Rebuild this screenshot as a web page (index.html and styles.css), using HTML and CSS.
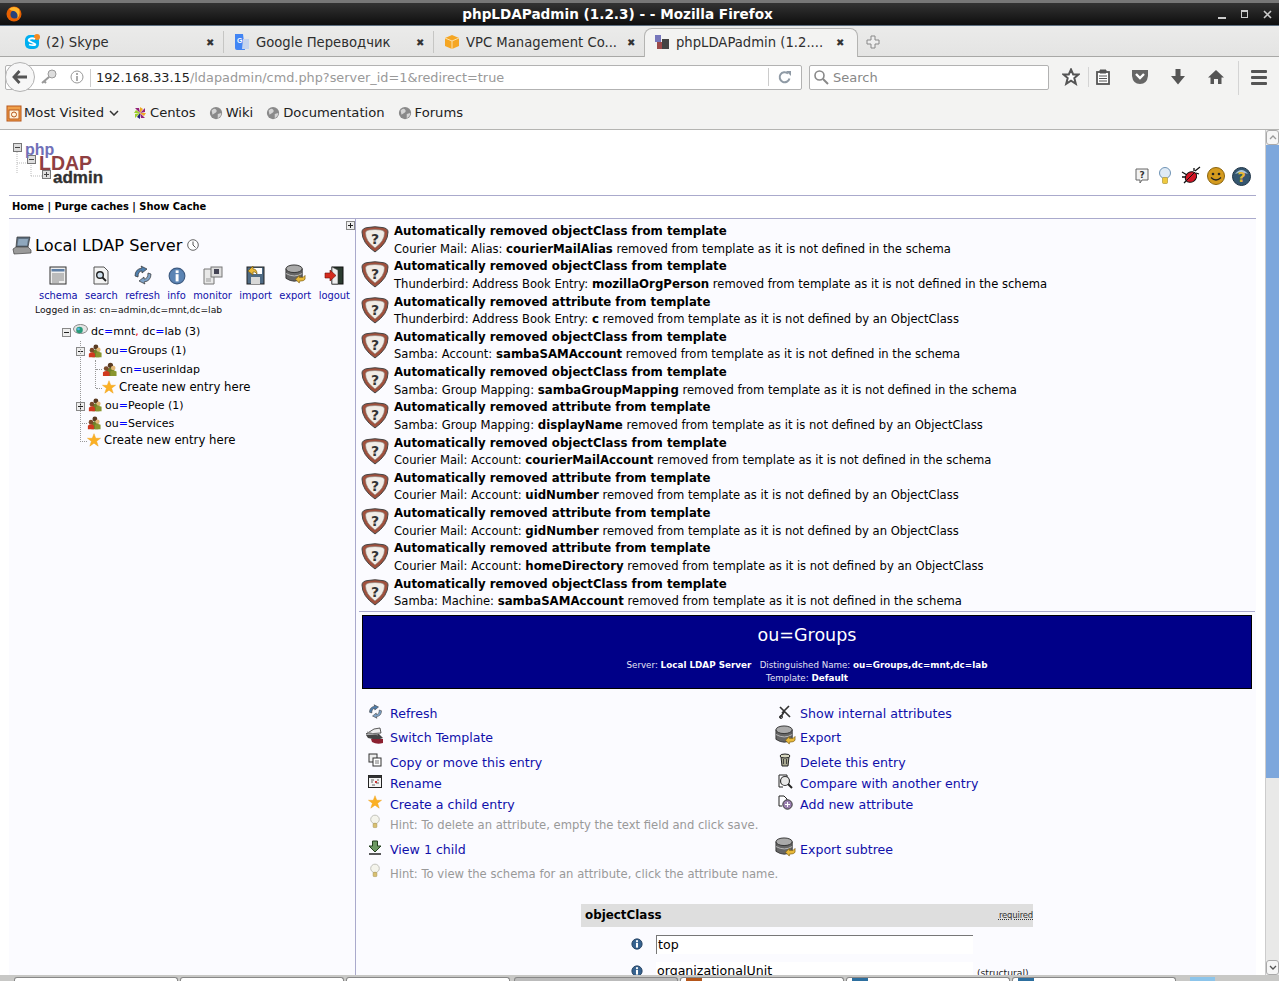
FILE: index.html
```html
<!DOCTYPE html>
<html lang="en">
<head>
    <meta charset="UTF-8">
    <meta name="viewport" content="width=device-width, initial-scale=1.0">
    <title>phpLDAPadmin (1.2.3) - - Mozilla Firefox</title>
    <link rel="stylesheet" href="styles.css">
</head>
<body>

<svg class="defs" width="0" height="0">
    <symbol id="i-warn" viewBox="0 0 28 28">
        <path d="M1 7Q1 3 7 2.500Q14 1 21 2.500Q27 3 27 7Q27 18 14 27Q1 18 1 7Z" fill="#a0503c" stroke="#444"/>
        <path d="M4.500 8Q4.500 5.500 8 5Q14 4 20 5Q23.500 5.500 23.500 8Q23.500 16 14 23Q4.500 16 4.500 8Z" fill="#f1ece6" stroke="#8a8078" stroke-width=".6"/>
        <text x="14" y="18.500" text-anchor="middle" font-family="DejaVu Sans" font-weight="700" font-size="14" fill="#333">?</text>
    </symbol>
    <symbol id="i-folks" viewBox="0 0 16 16">
        <circle cx="9" cy="3.500" r="2.800" fill="#5a3b22"/>
        <path d="M5 15V8Q9 4 13 8V15Z" fill="#6f7f2a"/>
        <circle cx="4.500" cy="7" r="2.600" fill="#7a4a2a"/>
        <path d="M1 15V11Q4.500 8 8 11V15Z" fill="#d0391f"/>
        <circle cx="12" cy="6.500" r="2.400" fill="#e3b878"/>
        <path d="M9 15V10Q12 8 15.500 10V15Z" fill="#8a962f"/>
    </symbol>
    <symbol id="i-star" viewBox="0 0 16 16">
        <path d="M8 .8L10 6H15.500L11 9.300L12.800 15L8 11.600L3.200 15L5 9.300L.5 6H6Z" fill="#fbb024" stroke="#eea01a" stroke-width=".5"/>
    </symbol>
    <symbol id="i-info" viewBox="0 0 16 16">
        <circle cx="8" cy="8" r="7" fill="#5b84b4" stroke="#3d5a80"/>
        <rect x="6.800" y="3" width="2.600" height="2.400" fill="#fff"/>
        <rect x="6.800" y="6.400" width="2.600" height="6.400" fill="#fff"/>
    </symbol>
    <symbol id="i-dark-info" viewBox="0 0 14 14">
        <circle cx="7" cy="7" r="6" fill="#36628f" stroke="#1e3a5a"/>
        <rect x="5.800" y="2.600" width="2.400" height="2" fill="#fff"/>
        <rect x="5.800" y="5.600" width="2.400" height="5.600" fill="#fff"/>
    </symbol>
    <symbol id="i-refresh" viewBox="0 0 20 20">
        <path d="M2 11Q2 4 9 3L8 1L14 4L9 8L9 6Q5 6 5 12Z" fill="#4f7fae" stroke="#333" stroke-width=".7"/>
        <path d="M18 9Q18 16 11 17L12 19L6 16L11 12L11 14Q15 14 15 8Z" fill="#7fa3c8" stroke="#333" stroke-width=".7"/>
    </symbol>
    <symbol id="i-db" viewBox="0 0 22 22">
        <path d="M1 5V15Q10 21 18 15V5Z" fill="#666" stroke="#333"/>
        <ellipse cx="9.500" cy="5" rx="8.500" ry="4" fill="#aaa" stroke="#333"/>
        <path d="M1 10Q10 15 18 10" fill="none" stroke="#bbb"/>
        <path d="M11 16L15 12V14H19L21 12V16Q20 18 15 18V20Z" fill="#e9b93a" stroke="#7a5c10" stroke-width=".7"/>
    </symbol>
    <symbol id="i-bulb" viewBox="0 0 14 18">
        <circle cx="7" cy="6" r="5" fill="#f4f4ec" stroke="#b9b9b0"/>
        <rect x="4.800" y="10.500" width="4.400" height="5" rx="1" fill="#d9c070" stroke="#a29050" stroke-width=".6"/>
    </symbol>
    <symbol id="i-minus" viewBox="0 0 9 9">
        <rect x=".5" y=".5" width="8" height="8" fill="#eee" stroke="#888"/>
        <path d="M2 4.500H7" stroke="#222"/>
    </symbol>
    <symbol id="i-plus" viewBox="0 0 9 9">
        <rect x=".5" y=".5" width="8" height="8" fill="#eee" stroke="#888"/>
        <path d="M2 4.500H7M4.500 2V7" stroke="#222"/>
    </symbol>
    <symbol id="i-globe" viewBox="0 0 16 16">
        <circle cx="8" cy="8" r="7" fill="#8a8a8a"/>
        <path d="M3 5Q6 2 8 4T7 8T4 10ZM10 9L14 8Q14 12 10 14Z" fill="#d5d5d5"/>
    </symbol>
</svg>

<div class="window">

    <!-- window title -->
    <div class="titlebar">
        <svg class="ff-logo" width="16" height="16" viewBox="0 0 16 16">
            <circle cx="8" cy="8" r="7.500" fill="#e66000"/>
            <circle cx="8.500" cy="8.500" r="4" fill="#24407c"/>
            <path d="M3 3Q8 -1 13 3Q15 9 11 13Q13 7 8 5Q5 5 3 3Z" fill="#ffb52c"/>
        </svg>
        <span class="title-text">phpLDAPadmin (1.2.3) - - Mozilla Firefox</span>
        <div class="win-btns">
            <span class="win-min"></span>
            <span class="win-max"></span>
            <svg width="9" height="9" viewBox="0 0 9 9"><path d="M1 1L8 8M8 1L1 8" stroke="#ccc" stroke-width="1.600"/></svg>
        </div>
    </div>

    <!-- tabs -->
    <div class="tabbar">
        <div class="tab">
            <svg width="16" height="16" viewBox="0 0 16 16">
                <rect x="1" y="1" width="14" height="14" rx="5" fill="#00aff0"/>
                <circle cx="13" cy="3" r="3" fill="#f58a1f"/>
                <path d="M11 5Q8 3.500 5.500 5T8 8.500T10.500 11T5 10.500" fill="none" stroke="#fff" stroke-width="1.800"/>
            </svg>
            <span class="tab-name">(2) Skype</span>
            <span class="tab-x">✖</span>
        </div>
        <div class="tab">
            <svg width="16" height="16" viewBox="0 0 16 16">
                <path d="M1 0H9L11 16H3Q1 16 1 14Z" fill="#4285f4"/>
                <path d="M9 5H15V15H8Z" fill="#c5d4ee"/>
                <text x="3" y="9" font-family="Liberation Sans" font-weight="700" font-size="7" fill="#fff">G</text>
            </svg>
            <span class="tab-name">Google Переводчик</span>
            <span class="tab-x">✖</span>
        </div>
        <div class="tab tab-last">
            <svg width="16" height="16" viewBox="0 0 16 16">
                <path d="M1 4L8 1L15 4V12L8 15L1 12Z" fill="#f5a623"/>
                <path d="M1 4L8 7L15 4M8 7V15" fill="none" stroke="#fce0a8"/>
            </svg>
            <span class="tab-name">VPC Management Co...</span>
            <span class="tab-x">✖</span>
        </div>
        <div class="tab tab-active">
            <svg width="16" height="16" viewBox="0 0 16 16">
                <rect x="1" y="1" width="6" height="7" fill="#7777bb"/>
                <rect x="3" y="8" width="5" height="7" fill="#9c4a4a"/>
                <rect x="8" y="5" width="7" height="10" fill="#444"/>
            </svg>
            <span class="tab-name">phpLDAPadmin (1.2....</span>
            <span class="tab-x">✖</span>
        </div>
        <svg class="tab-new" width="14" height="14" viewBox="0 0 14 14">
            <path d="M5 1H9V5H13V9H9V13H5V9H1V5H5Z" fill="#eee" stroke="#888"/>
        </svg>
    </div>

    <!-- url bar -->
    <div class="navbar">
        <div class="urlbox">
            <div class="backbtn">
                <svg width="16" height="14" viewBox="0 0 16 14"><path d="M7.500 1L2 7L7.500 13M2.500 7H15" fill="none" stroke="#555" stroke-width="2.800"/></svg>
            </div>
            <svg class="key-ico" width="18" height="16" viewBox="0 0 18 16">
                <circle cx="12" cy="5" r="4" fill="#ddd" stroke="#999"/>
                <path d="M9 8L2 14M4 12L6 14" fill="none" stroke="#999" stroke-width="2"/>
            </svg>
            <svg class="url-info" width="14" height="14" viewBox="0 0 14 14">
                <circle cx="7" cy="7" r="6" fill="none" stroke="#999"/>
                <path d="M7 6V11M7 3V5" stroke="#888" stroke-width="1.400"/>
            </svg>
            <span class="url-text"><b>192.168.33.15</b>/ldapadmin/cmd.php?server_id=1&amp;redirect=true</span>
            <span class="url-reload">
                <svg width="14" height="14" viewBox="0 0 14 14"><path d="M11.500 8.500A5 5 0 1 1 10 3.500" fill="none" stroke="#8f9aa5" stroke-width="2"/><path d="M8 1H13V6Z" fill="#8f9aa5"/></svg>
            </span>
        </div>
        <div class="searchbox">
            <svg width="16" height="16" viewBox="0 0 16 16"><circle cx="6.500" cy="6.500" r="4.500" fill="none" stroke="#888" stroke-width="1.600"/><path d="M10 10L15 15" stroke="#888" stroke-width="2"/></svg>
            <span>Search</span>
        </div>
        <div class="tools">
            <span class="slot slot-star"><svg width="18" height="18" viewBox="0 0 18 18"><path d="M9 1.500L11.200 6.500H16.500L12.300 10L13.800 15.800L9 12.700L4.200 15.800L5.700 10L1.500 6.500H6.800Z" fill="#fff" stroke="#555" stroke-width="2"/></svg></span>
            <span class="tool-sep"></span>
            <span class="slot slot-clip"><svg width="16" height="16" viewBox="0 0 16 16"><rect x="2" y="3" width="12" height="12" fill="#fff" stroke="#555" stroke-width="1.800"/><path d="M5 1H11V4H5ZM4 7H12M4 9.500H12M4 12H12" fill="#555" stroke="#555"/></svg></span>
            <span class="slot"><svg width="18" height="16" viewBox="0 0 18 16"><path d="M1 1H17V7Q16 15 9 15Q2 15 1 7Z" fill="#666"/><path d="M5 5L9 9L13 5" fill="none" stroke="#fff" stroke-width="2.400"/></svg></span>
            <span class="slot"><svg width="16" height="16" viewBox="0 0 16 16"><path d="M5.500 0H10.500V7H15L8 15.500L1 7H5.500Z" fill="#555"/></svg></span>
            <span class="slot"><svg width="18" height="16" viewBox="0 0 18 16"><path d="M9 1L17 8.500H14.500V15H11V10H7V15H3.500V8.500H1Z" fill="#555"/></svg></span>
            <span class="tool-sep tool-sep-tall"></span>
            <span class="burger"><i></i><i></i><i></i></span>
        </div>
    </div>

    <!-- bookmarks -->
    <div class="bookmarks">
        <span class="bm">
            <svg width="16" height="18" viewBox="0 0 16 18"><rect x="1" y="2" width="14" height="15" fill="#f0a04a" stroke="#b8561a"/><rect x="3" y="6" width="10" height="9" fill="#fff3dc" stroke="#b8561a"/><circle cx="8" cy="10.500" r="2.500" fill="none" stroke="#b8561a"/></svg>
            Most Visited<svg class="chev" width="10" height="6" viewBox="0 0 10 6"><path d="M1 1L5 5L9 1" fill="none" stroke="#333" stroke-width="1.500"/></svg>
        </span>
        <span class="bm">
            <svg width="14" height="14" viewBox="0 0 14 14"><path d="M7 7L2 2H6ZM7 7L12 2V6ZM7 7L12 12H8Z" fill="#932279"/><path d="M7 7L7 1L10 3ZM7 7L13 7L11 10Z" fill="#efa724"/><path d="M7 7L1 7L3 4ZM7 7L2 12L2 8Z" fill="#9ccd2a"/><path d="M7 7L7 13L4 11Z" fill="#262577"/></svg>
            Centos
        </span>
        <span class="bm"><svg width="14" height="14"><use href="#i-globe"/></svg>Wiki</span>
        <span class="bm"><svg width="14" height="14"><use href="#i-globe"/></svg>Documentation</span>
        <span class="bm"><svg width="14" height="14"><use href="#i-globe"/></svg>Forums</span>
    </div>

    <!-- page -->
    <div class="page">
        <div class="page-inner">
            <header class="head">
                <div class="logo">
                    <svg class="logo-tree" width="42" height="44" viewBox="0 0 42 44">
                        <path d="M5 14V36M5 25H19M19 25V38M19 38H34" fill="none" stroke="#bbb" stroke-dasharray="1 1"/>
                        <g fill="#ddd" stroke="#777"><rect x="1.500" y="5.500" width="8" height="8"/><rect x="15.500" y="17.500" width="8" height="8"/><rect x="30.500" y="32.500" width="8" height="8"/></g>
                        <path d="M3 9.500H8M17 21.500H22M32 36.500H37M34.500 34V39" stroke="#444"/>
                    </svg>
                    <span class="logo-php">php</span>
                    <span class="logo-ldap">LDAP</span>
                    <span class="logo-admin">admin</span>
                </div>
                <div class="head-icons">
                    <svg width="14" height="16" viewBox="0 0 14 16"><path d="M1 1H13V12H7L5 15V12H1Z" fill="#f2f2f2" stroke="#666"/><text x="7" y="10" text-anchor="middle" font-family="DejaVu Sans" font-weight="700" font-size="9" fill="#333">?</text></svg>
                    <svg width="14" height="20" viewBox="0 0 14 18"><circle cx="7" cy="6" r="5.500" fill="#dfeaf5" stroke="#6f93b5"/><rect x="4.500" y="10.500" width="5" height="6" rx="1" fill="#efc93e" stroke="#a28a2a" stroke-width=".6"/></svg>
                    <svg width="20" height="20" viewBox="0 0 20 20"><path d="M1 6L6 9M1 11H5M3 17L7 13M19 1L14 5M13 2L13 5M18 8L15 7" stroke="#111" stroke-width="1.300"/><ellipse cx="10" cy="11" rx="6" ry="5" fill="#d31525" stroke="#111" transform="rotate(-35 10 11)"/><path d="M5 15L14 6" stroke="#111"/></svg>
                    <svg width="18" height="18" viewBox="0 0 18 18"><circle cx="9" cy="9" r="8.500" fill="#d59b1e" stroke="#8a6510"/><circle cx="6" cy="7" r="1.300" fill="#222"/><circle cx="12" cy="7" r="1.300" fill="#222"/><path d="M4 10.500Q9 15.500 14 10.500" fill="none" stroke="#222" stroke-width="1.300"/></svg>
                    <svg width="19" height="19" viewBox="0 0 19 19"><circle cx="9.500" cy="9.500" r="9" fill="#35566f" stroke="#1f3446"/><path d="M3 7Q9.500 -1 16 7Q9.500 4 3 7Z" fill="#a9c4d8"/><text x="9.500" y="15" text-anchor="middle" font-family="DejaVu Sans" font-weight="700" font-size="14" fill="#e6b833">?</text></svg>
                </div>
            </header>
            <nav class="topmenu">Home | Purge caches | Show Cache</nav>

            <div class="columns">
                <!-- left tree -->
                <aside class="tree-panel">
                    <svg class="collapse" width="9" height="9"><use href="#i-plus"/></svg>
                    <div class="server-title">
                        <svg width="20" height="20" viewBox="0 0 20 20">
                            <path d="M5 2H18L16 12H4Z" fill="#5e6f80" stroke="#333" stroke-width=".7"/>
                            <path d="M6.500 4H16L15 10.500H5.500Z" fill="#8fa7bd"/>
                            <path d="M1 14L4 12H16L19 15V18L2 19Z" fill="#9a9a9a" stroke="#444" stroke-width=".7"/>
                        </svg>
                        <span>Local LDAP Server</span>
                        <svg width="12" height="12" viewBox="0 0 12 12"><circle cx="6" cy="6" r="5.300" fill="#fff" stroke="#666"/><path d="M6 2.500V6L8.500 8.500" fill="none" stroke="#555"/></svg>
                    </div>
                    <div class="server-links">
                        <a class="slink">
                            <svg width="18" height="19" viewBox="0 0 18 19"><rect x="1" y="1" width="16" height="17" fill="#eee" stroke="#333"/><rect x="2.500" y="3" width="13" height="2.500" fill="#5f7fa5"/><path d="M3 8H15M3 10H15M3 12H15M3 14H15M3 16H10" stroke="#888"/></svg>
                            schema
                        </a>
                        <a class="slink">
                            <svg width="16" height="19" viewBox="0 0 16 19"><path d="M1 1H11L15 5V18H1Z" fill="#f4f4f4" stroke="#555"/><circle cx="7" cy="9" r="3.300" fill="#cfe0ee" stroke="#222" stroke-width="1.400"/><path d="M9.500 11.500L13 15" stroke="#222" stroke-width="1.800"/></svg>
                            search
                        </a>
                        <a class="slink"><svg width="20" height="20"><use href="#i-refresh"/></svg>refresh</a>
                        <a class="slink"><svg width="18" height="18"><use href="#i-info"/></svg>info</a>
                        <a class="slink">
                            <svg width="20" height="19" viewBox="0 0 20 19"><path d="M1 3H11V18H1Z" fill="#e8e8e8" stroke="#777"/><rect x="8" y="1" width="11" height="10" fill="#ddd" stroke="#777"/><rect x="11" y="3" width="5" height="5" fill="#445"/><path d="M3 13H8M3 15H8" stroke="#999"/></svg>
                            monitor
                        </a>
                        <a class="slink">
                            <svg width="19" height="20" viewBox="0 0 19 20"><rect x="1" y="2" width="17" height="17" fill="#4f6b85" stroke="#222"/><rect x="6" y="3" width="10" height="6" fill="#fff"/><rect x="5" y="12" width="9" height="7" fill="#d8d8d8"/><path d="M2 6L7 1V4Q11 4 11 9Q9 6 7 7V10Z" fill="#eab839" stroke="#7a5c10" stroke-width=".7"/></svg>
                            import
                        </a>
                        <a class="slink"><svg width="21" height="21"><use href="#i-db"/></svg>export</a>
                        <a class="slink">
                            <svg width="20" height="19" viewBox="0 0 20 19"><rect x="8" y="1" width="11" height="17" fill="#2c3c30" stroke="#111"/><path d="M8 1L14 4V18H8Z" fill="#eee" stroke="#333" stroke-width=".6"/><path d="M1 7H6V4L12 9.500L6 15V12H1Z" fill="#d52b1e" stroke="#6a1008" stroke-width=".6"/></svg>
                            logout
                        </a>
                    </div>
                    <div class="logged">Logged in as: cn=admin,dc=mnt,dc=lab</div>

                    <ul class="tree">
                        <li class="node r19 root">
                            <svg class="toggle" width="9" height="9"><use href="#i-minus"/></svg>
                            <svg width="15" height="12" viewBox="0 0 15 12"><ellipse cx="7.500" cy="5" rx="7" ry="4.500" fill="#e4e4e4" stroke="#888"/><circle cx="6.500" cy="6" r="3.300" fill="#2a9a7a"/><circle cx="5.500" cy="5" r="1.300" fill="#58b8e8"/></svg>
                            <span class="dn">dc<em>=</em>mnt<u>,</u> dc<em>=</em>lab (3)</span>
                        </li>
                        <li>
                            <ul class="branch">
                                <li class="node r19 ou">
                                    <svg class="toggle" width="9" height="9"><use href="#i-minus"/></svg>
                                    <svg width="14" height="14"><use href="#i-folks"/></svg>
                                    <span class="dn">ou<em>=</em>Groups (1)</span>
                                </li>
                                <li>
                                    <ul class="branch branch-in">
                                        <li class="node leaf r19"><svg width="15" height="15"><use href="#i-folks"/></svg><span class="dn">cn<em>=</em>userinldap</span></li>
                                        <li class="node leaf r15"><svg width="14" height="14"><use href="#i-star"/></svg><span>Create new entry here</span></li>
                                    </ul>
                                </li>
                                <li class="node ou">
                                    <svg class="toggle" width="9" height="9"><use href="#i-plus"/></svg>
                                    <svg width="14" height="14"><use href="#i-folks"/></svg>
                                    <span class="dn">ou<em>=</em>People (1)</span>
                                </li>
                                <li class="node ou stub"><svg width="14" height="14"><use href="#i-folks"/></svg><span class="dn">ou<em>=</em>Services</span></li>
                                <li class="node ou stub r16"><svg width="14" height="14"><use href="#i-star"/></svg><span>Create new entry here</span></li>
                            </ul>
                        </li>
                    </ul>
                </aside>

                <!-- right content -->
                <main class="content">
                    <div class="msg"><svg width="28" height="28"><use href="#i-warn"/></svg><p><b>Automatically removed objectClass from template</b><br>Courier Mail: Alias: <b>courierMailAlias</b> removed from template as it is not defined in the schema</p></div>
                    <div class="msg"><svg width="28" height="28"><use href="#i-warn"/></svg><p><b>Automatically removed objectClass from template</b><br>Thunderbird: Address Book Entry: <b>mozillaOrgPerson</b> removed from template as it is not defined in the schema</p></div>
                    <div class="msg"><svg width="28" height="28"><use href="#i-warn"/></svg><p><b>Automatically removed attribute from template</b><br>Thunderbird: Address Book Entry: <b>c</b> removed from template as it is not defined by an ObjectClass</p></div>
                    <div class="msg"><svg width="28" height="28"><use href="#i-warn"/></svg><p><b>Automatically removed objectClass from template</b><br>Samba: Account: <b>sambaSAMAccount</b> removed from template as it is not defined in the schema</p></div>
                    <div class="msg"><svg width="28" height="28"><use href="#i-warn"/></svg><p><b>Automatically removed objectClass from template</b><br>Samba: Group Mapping: <b>sambaGroupMapping</b> removed from template as it is not defined in the schema</p></div>
                    <div class="msg"><svg width="28" height="28"><use href="#i-warn"/></svg><p><b>Automatically removed attribute from template</b><br>Samba: Group Mapping: <b>displayName</b> removed from template as it is not defined by an ObjectClass</p></div>
                    <div class="msg"><svg width="28" height="28"><use href="#i-warn"/></svg><p><b>Automatically removed objectClass from template</b><br>Courier Mail: Account: <b>courierMailAccount</b> removed from template as it is not defined in the schema</p></div>
                    <div class="msg"><svg width="28" height="28"><use href="#i-warn"/></svg><p><b>Automatically removed attribute from template</b><br>Courier Mail: Account: <b>uidNumber</b> removed from template as it is not defined by an ObjectClass</p></div>
                    <div class="msg"><svg width="28" height="28"><use href="#i-warn"/></svg><p><b>Automatically removed attribute from template</b><br>Courier Mail: Account: <b>gidNumber</b> removed from template as it is not defined by an ObjectClass</p></div>
                    <div class="msg"><svg width="28" height="28"><use href="#i-warn"/></svg><p><b>Automatically removed attribute from template</b><br>Courier Mail: Account: <b>homeDirectory</b> removed from template as it is not defined by an ObjectClass</p></div>
                    <div class="msg"><svg width="28" height="28"><use href="#i-warn"/></svg><p><b>Automatically removed objectClass from template</b><br>Samba: Machine: <b>sambaSAMAccount</b> removed from template as it is not defined in the schema</p></div>

                    <hr class="rule">

                    <div class="entry-head">
                        <h3>ou=Groups</h3>
                        <div class="entry-sub">Server: <b>Local LDAP Server</b> &nbsp; Distinguished Name: <b>ou=Groups,dc=mnt,dc=lab</b><br>Template: <b>Default</b></div>
                    </div>

                    <div class="actions">
                        <a class="act h24"><span class="ico"><svg width="15" height="15"><use href="#i-refresh"/></svg></span>Refresh</a>
                        <a class="act h24">
                            <span class="ico"><svg width="14" height="14" viewBox="0 0 14 14"><path d="M2 13L6 7M2 2L5 5L12 12M11 1L8 4L4 8" fill="none" stroke="#333" stroke-width="1.700"/><circle cx="3" cy="12" r="1.500" fill="none" stroke="#333"/></svg></span>
                            Show internal attributes
                        </a>
                        <a class="act h24">
                            <span class="ico"><svg width="21" height="18" viewBox="0 0 21 18"><path d="M1 7L9 2L15 1L16 6Z" fill="#eee" stroke="#333" stroke-width=".8"/><path d="M1 8L14 7L18 11L12 13L3 11Z" fill="#444"/><path d="M6 12H18V16Q12 18 7 15Z" fill="#8b2030"/><path d="M2 5L13 8" stroke="#888"/></svg></span>
                            Switch Template
                        </a>
                        <a class="act h24"><span class="ico"><svg width="21" height="21"><use href="#i-db"/></svg></span>Export</a>
                        <a class="act gap2">
                            <span class="ico"><svg width="14" height="14" viewBox="0 0 14 14"><rect x="1" y="1" width="8" height="8" fill="#eee" stroke="#333"/><rect x="5" y="5" width="8" height="8" fill="#fff" stroke="#333"/><path d="M7 8H11M7 10H11" stroke="#777"/></svg></span>
                            Copy or move this entry
                        </a>
                        <a class="act gap2">
                            <span class="ico"><svg width="12" height="14" viewBox="0 0 12 14"><path d="M2 4H10L9 13H3Z" fill="#a8a890" stroke="#222"/><ellipse cx="6" cy="3" rx="5" ry="2" fill="#d8d8c0" stroke="#222"/><path d="M4.500 6V11M7.500 6V11" stroke="#444"/></svg></span>
                            Delete this entry
                        </a>
                        <a class="act">
                            <span class="ico"><svg width="14" height="13" viewBox="0 0 14 13"><rect x=".5" y=".5" width="13" height="12" fill="#f4f4f4" stroke="#222"/><rect x=".5" y=".5" width="13" height="2.500" fill="#333"/><path d="M3 5H6M3 7H5M8 8H11M9 5H11M4 10H7" stroke="#666"/><rect x="7" y="6" width="2" height="2" fill="#c33"/></svg></span>
                            Rename
                        </a>
                        <a class="act">
                            <span class="ico"><svg width="15" height="15" viewBox="0 0 15 15"><path d="M1 1H9V5" fill="none" stroke="#222"/><path d="M1 1V13H5" fill="#fff" stroke="#222"/><circle cx="7" cy="7" r="4.500" fill="#e8e8e8" stroke="#333" stroke-width="1.200"/><path d="M10 10L14 14" stroke="#222" stroke-width="2"/></svg></span>
                            Compare with another entry
                        </a>
                        <a class="act"><span class="ico"><svg width="14" height="14"><use href="#i-star"/></svg></span>Create a child entry</a>
                        <a class="act">
                            <span class="ico"><svg width="15" height="15" viewBox="0 0 15 15"><path d="M1 1H6L9 4V5M1 1V11H4" fill="#fff" stroke="#222"/><circle cx="9.500" cy="9.500" r="4.700" fill="#9a7fb0" stroke="#333"/><path d="M7 9.500H12M9.500 7V12" stroke="#fff"/></svg></span>
                            Add new attribute
                        </a>
                        <div class="act hint wide"><span class="ico"><svg width="12" height="16"><use href="#i-bulb"/></svg></span>Hint: To delete an attribute, empty the text field and click save.</div>
                        <a class="act h28">
                            <span class="ico"><svg width="14" height="15" viewBox="0 0 14 15"><path d="M4.500 1H9.500V6H13L7 12L1 6H4.500Z" fill="#6d9a63" stroke="#24401f"/><path d="M1 14H13" stroke="#222" stroke-width="1.500"/></svg></span>
                            View 1 child
                        </a>
                        <a class="act h28"><span class="ico"><svg width="21" height="21"><use href="#i-db"/></svg></span>Export subtree</a>
                        <div class="act hint wide"><span class="ico"><svg width="12" height="16"><use href="#i-bulb"/></svg></span>Hint: To view the schema for an attribute, click the attribute name.</div>
                    </div>

                    <div class="attr">
                        <div class="attr-head"><b>objectClass</b><span class="req">required</span></div>
                        <div class="attr-val">
                            <svg width="12" height="12"><use href="#i-dark-info"/></svg>
                            <span class="val-box val-input">top</span>
                        </div>
                        <div class="attr-val">
                            <svg width="12" height="12"><use href="#i-dark-info"/></svg>
                            <span class="val-box">organizationalUnit</span>
                            <span class="val-note">(structural)</span>
                        </div>
                    </div>
                </main>
            </div>
        </div>

        <div class="scrollbar">
            <div class="sb-btn"><svg width="8" height="5" viewBox="0 0 8 5"><path d="M1 4L4 1L7 4" fill="none" stroke="#999" stroke-width="1.300"/></svg></div>
            <div class="sb-thumb"></div>
            <div class="sb-track"></div>
            <div class="sb-btn"><svg width="8" height="5" viewBox="0 0 8 5"><path d="M1 1L4 4L7 1" fill="none" stroke="#555" stroke-width="1.300"/></svg></div>
        </div>
    </div>

    <!-- panel at the bottom of the desktop -->
    <div class="taskbar">
        <span class="task"></span>
        <span class="task"></span>
        <span class="task"></span>
        <span class="task task-on"></span>
        <span class="task"><i class="mark mark-orange"></i></span>
        <span class="task"><i class="mark mark-blue"></i></span>
        <span class="task"><i class="mark mark-blue"></i></span>
        <span class="tray"></span>
    </div>
</div>

</body>
</html>
```

FILE: styles.css
```css
html, body { margin: 0; padding: 0; height: 100%; overflow: hidden; background: #fff; }
body { font-family: "DejaVu Sans", sans-serif; font-size: 12px; color: #000; }
.defs { position: absolute; }
svg { flex: none; }
a { color: #1010aa; }

.window { width: 1279px; height: 981px; display: flex; flex-direction: column; overflow: hidden; }

/* title bar */
.titlebar { height: 26px; box-sizing: border-box; border-top: 3px solid #777; border-bottom: 1px solid #5c6e80; background: linear-gradient(#333, #0e0e0e); display: flex; align-items: center; padding: 0 7px 0 6px; color: #fff; }
.title-text { flex: 1; text-align: center; font-weight: 700; font-size: 13.6px; padding-right: 5px; }
.win-btns { display: flex; align-items: center; gap: 15px; }
.win-min { width: 8px; height: 2px; background: #ccc; margin-top: 8px; }
.win-max { width: 5px; height: 5px; border: 1px solid #ccc; border-top-width: 2px; }

/* tabs */
.tabbar { height: 31px; box-sizing: border-box; background: linear-gradient(#ebebea, #e4e4e3); border-bottom: 1px solid #a8a8a6; display: flex; align-items: center; padding: 2px 0 0 14px; }
.tab { width: 210px; height: 22px; box-sizing: border-box; display: flex; align-items: center; gap: 6px; padding: 0 7px 0 10px; border-right: 1px solid #c6c6c4; font-size: 13.2px; color: #2e2e2e; white-space: nowrap; }
.tab-last { border-right: none; }
.tab-name { flex: 1; overflow: hidden; }
.tab-x { font-size: 10px; color: #333; width: 10px; }
.tab-active { align-self: flex-end; width: 214px; height: 29px; margin-bottom: -1px; padding: 0 11px 2px 9px; background: #f3f3f2; border: 1px solid #b4b4b2; border-bottom: none; border-radius: 8px 8px 0 0; }
.tab-new { margin-left: 8px; }

/* url bar */
.navbar { height: 38px; background: #f3f3f2; display: flex; align-items: center; padding: 2px 0 0 5px; box-sizing: border-box; }
.urlbox { width: 797px; height: 25px; box-sizing: border-box; background: #fff; border: 1px solid #b2b2b2; border-radius: 2px; display: flex; align-items: center; font-size: 12.85px; color: #999; }
.backbtn { width: 30px; height: 30px; box-sizing: border-box; border: 1px solid #b2b2b2; border-radius: 50%; background: #f7f7f7; display: flex; align-items: center; justify-content: center; margin-left: -1px; flex: none; }
.key-ico { margin-left: 5px; }
.url-info { margin-left: 12px; }
.url-text { flex: 1; margin: 1px 0 0 6px; border-left: 1px solid #ccc; padding-left: 5px; white-space: nowrap; line-height: 18px; }
.url-text b { font-weight: 400; color: #222; }
.url-reload { width: 32px; height: 18px; border-left: 1px solid #ccc; display: flex; align-items: center; justify-content: center; }
.searchbox { width: 240px; height: 25px; box-sizing: border-box; margin-left: 7px; background: #fff; border: 1px solid #b2b2b2; border-radius: 2px; display: flex; align-items: center; gap: 4px; padding-left: 3px; font-size: 13px; color: #888; }
.tools { flex: 1; display: flex; align-items: center; padding-left: 4px; }
.slot { width: 38px; display: flex; justify-content: center; flex: none; }
.slot-star { width: 35px; }
.slot-clip { width: 27px; margin-right: 5px; }
.tool-sep { width: 1px; height: 20px; background: #d4d4d4; flex: none; }
.tool-sep-tall { height: 35px; margin-left: 3px; margin-top: 2px; }
.burger { display: flex; flex-direction: column; gap: 3px; margin-left: 12px; }
.burger i { display: block; width: 16px; height: 3px; background: #555; border-radius: 1px; }

/* bookmarks */
.bookmarks { height: 35px; box-sizing: border-box; background: #f3f3f2; border-bottom: 1px solid #b4b4b2; display: flex; align-items: center; padding: 1px 0 0 6px; gap: 13px; font-size: 13.15px; color: #222; }
.bm { display: flex; align-items: center; gap: 3px; white-space: nowrap; }
.bm:first-child { gap: 2px; margin-right: 1px; }
.chev { margin-left: 3px; }

/* page frame */
.page { flex: 1; min-height: 0; display: flex; overflow: hidden; }
.page-inner { width: 1265px; display: flex; flex-direction: column; }

.head { height: 66px; box-sizing: border-box; margin: 0 9px; border-bottom: 1px solid #aaaacc; display: flex; justify-content: space-between; width: 1247px; flex: none; }
.logo { display: flex; flex-direction: column; font-weight: 700; padding-top: 13px; margin-left: 3px; white-space: nowrap; position: relative; }
.logo span { display: block; font-family: "Liberation Sans", sans-serif; position: relative; }
.logo-tree { position: absolute; left: 0; top: 8px; }
.logo-php { color: #7070b8; font-size: 16px; line-height: 14px; margin-left: 13px; }
.logo-ldap { color: #8f3f42; font-size: 19.5px; line-height: 13px; margin-left: 27px; }
.logo-admin { color: #303030; font-size: 17px; line-height: 15px; margin-left: 41px; -webkit-text-stroke: .3px #303030; }
.head-icons { display: flex; align-items: center; gap: 7px; padding-top: 27px; padding-right: 5px; }
.head-icons svg:nth-child(2), .head-icons svg:nth-child(3) { margin-left: 2px; }
.head-icons svg:nth-child(4) { margin-left: -1px; }

.topmenu { height: 23px; box-sizing: border-box; margin: 0 9px; width: 1247px; border-bottom: 1px solid #aaaacc; padding-left: 3px; font-size: 9.9px; font-weight: 700; line-height: 22px; flex: none; }

.columns { flex: 1; min-height: 0; display: flex; margin-left: 9px; width: 1247px; }

/* tree panel */
.tree-panel { width: 347px; box-sizing: border-box; background: #fbfbff; border-right: 1px solid #aaaacc; flex: none; position: relative; }
.collapse { position: absolute; right: 0; top: 2px; }
.server-title { display: flex; align-items: center; height: 22px; margin-top: 15px; padding-left: 3px; font-size: 16.2px; gap: 3px; }
.server-title svg:last-child { margin-left: 2px; }
.server-links { display: flex; gap: 7.4px; margin-top: 8px; padding-left: 30px; }
.slink { display: flex; flex-direction: column; align-items: center; justify-content: flex-end; gap: 5px; height: 38px; font-size: 9.9px; line-height: 12px; }
.logged { font-size: 9.2px; padding-left: 26px; margin-top: 1px; line-height: 14px; color: #111; }

.tree, .branch { list-style: none; margin: 0; padding: 0; }
.tree { margin-top: 5px; padding-left: 53px; font-size: 11.7px; }
.node { height: 18px; display: flex; align-items: center; gap: 3px; white-space: nowrap; }
.r19 { height: 19px; }
.r16 { height: 16px; }
.r15 { height: 15px; }
.root svg:nth-child(2) { margin-left: -1px; margin-top: -3px; }
.toggle { margin-top: 2px; }
.dn { font-size: 11px; }
.dn em { font-style: normal; color: #0000ff; }
.dn u { text-decoration: none; color: #ff0000; }
.tree > li > .branch { margin-left: 18px; position: relative; }
.tree > li > .branch::before { content: ""; position: absolute; left: 0; top: 0; height: 99px; border-left: 1px dotted #999; }
.ou { margin-left: -4px; gap: 3px; }
.stub { padding-left: 11px; position: relative; }
.stub .dn { margin-left: 1px; }
.stub::before { content: ""; position: absolute; left: 4px; top: 9px; width: 7px; border-top: 1px dotted #999; }
.branch-in { margin-left: 15px; padding-left: 6px; border-left: 1px dotted #999; height: 28px; margin-bottom: 8px; }
.leaf { position: relative; }
.leaf::before { content: ""; position: absolute; left: -6px; top: 9px; width: 6px; border-top: 1px dotted #999; }

/* main column */
.content { flex: 1; background: #fbfbff; min-width: 0; position: relative; }
.msg { height: 35.27px; display: flex; gap: 5px; padding-left: 5px; box-sizing: border-box; }
.content > .msg:first-child { margin-top: 4px; }
.msg svg { margin-top: 2px; }
.msg p { margin: 0; line-height: 17.6px; white-space: nowrap; font-size: 11.57px; }
.msg p b { font-size: 11.75px; }
.rule { border: none; border-top: 1px solid #aaaacc; margin: 0 1px 3px 3px; height: 0; }
.entry-head { width: 890px; height: 74px; box-sizing: border-box; margin-left: 6px; background: #000088; color: #fff; text-align: center; border: 1px solid #000; }
.entry-head h3 { margin: 0; font-weight: 400; font-size: 17.5px; line-height: 38px; }
.entry-sub { font-size: 8.7px; line-height: 13px; margin-top: 5px; color: #e4e4f4; }
.entry-sub b { color: #fff; font-size: 8.8px; }

.actions { display: grid; grid-template-columns: 410px 410px; margin: 13px 0 0 4px; }
.act { height: 21px; display: flex; align-items: center; font-size: 12.6px; white-space: nowrap; }
.h24 { height: 24px; }
.h28 { height: 28px; }
.gap2 { margin-top: 2px; }
.ico { width: 30px; display: flex; justify-content: center; flex: none; margin-top: -4px; }
.hint { font-size: 11.6px; color: #999; }
.hint .ico { margin-top: -6px; }
.wide { grid-column: 1 / 3; }

.attr { width: 452px; margin: 19px 0 0 225px; }
.attr-head { height: 23px; background: #dedede; display: flex; justify-content: space-between; align-items: center; padding-left: 4px; font-size: 11.9px; }
.req { font-size: 8.5px; text-decoration: underline dotted; color: #333; letter-spacing: -.2px; }
.attr-val { display: flex; align-items: center; margin-left: 50px; height: 19px; gap: 13px; margin-top: 8px; font-size: 12.6px; }
.val-box { width: 317px; height: 19px; box-sizing: border-box; background: #fff; padding-left: 1px; line-height: 18px; flex: none; }
.val-input { border-top: 1px solid #777; border-left: 1px solid #777; }
.val-note { font-size: 9.2px; margin-left: -9px; margin-top: 3px; color: #222; }

/* scrollbar */
.scrollbar { width: 14px; display: flex; flex-direction: column; background: #eee; border-left: 1px solid #ccc; box-sizing: border-box; }
.sb-btn { height: 15px; flex: none; display: flex; align-items: center; justify-content: center; background: #f6f6f6; border: 1px solid #aaa; border-radius: 3px; box-sizing: border-box; }
.sb-thumb { height: 633px; flex: none; background: #7da7dc; }
.sb-track { flex: 1; background: #e9e9e8; }

/* bottom panel */
.taskbar { height: 6px; flex: none; background: #c8c8c6; display: flex; align-items: flex-end; padding-left: 14px; gap: 2px; }
.task { width: 164px; height: 4px; box-sizing: border-box; background: #fff; border: 1px solid #888; border-bottom: none; border-radius: 3px 3px 0 0; overflow: hidden; }
.task-on { background: #bbb; margin-left: 2px; }
.mark { display: block; width: 16px; height: 3px; margin-left: 5px; }
.mark-orange { background: #b5561a; }
.mark-blue { background: #2d6f9f; }
.tray { width: 25px; height: 4px; background: #8cc4ea; margin-left: 12px; }
```
